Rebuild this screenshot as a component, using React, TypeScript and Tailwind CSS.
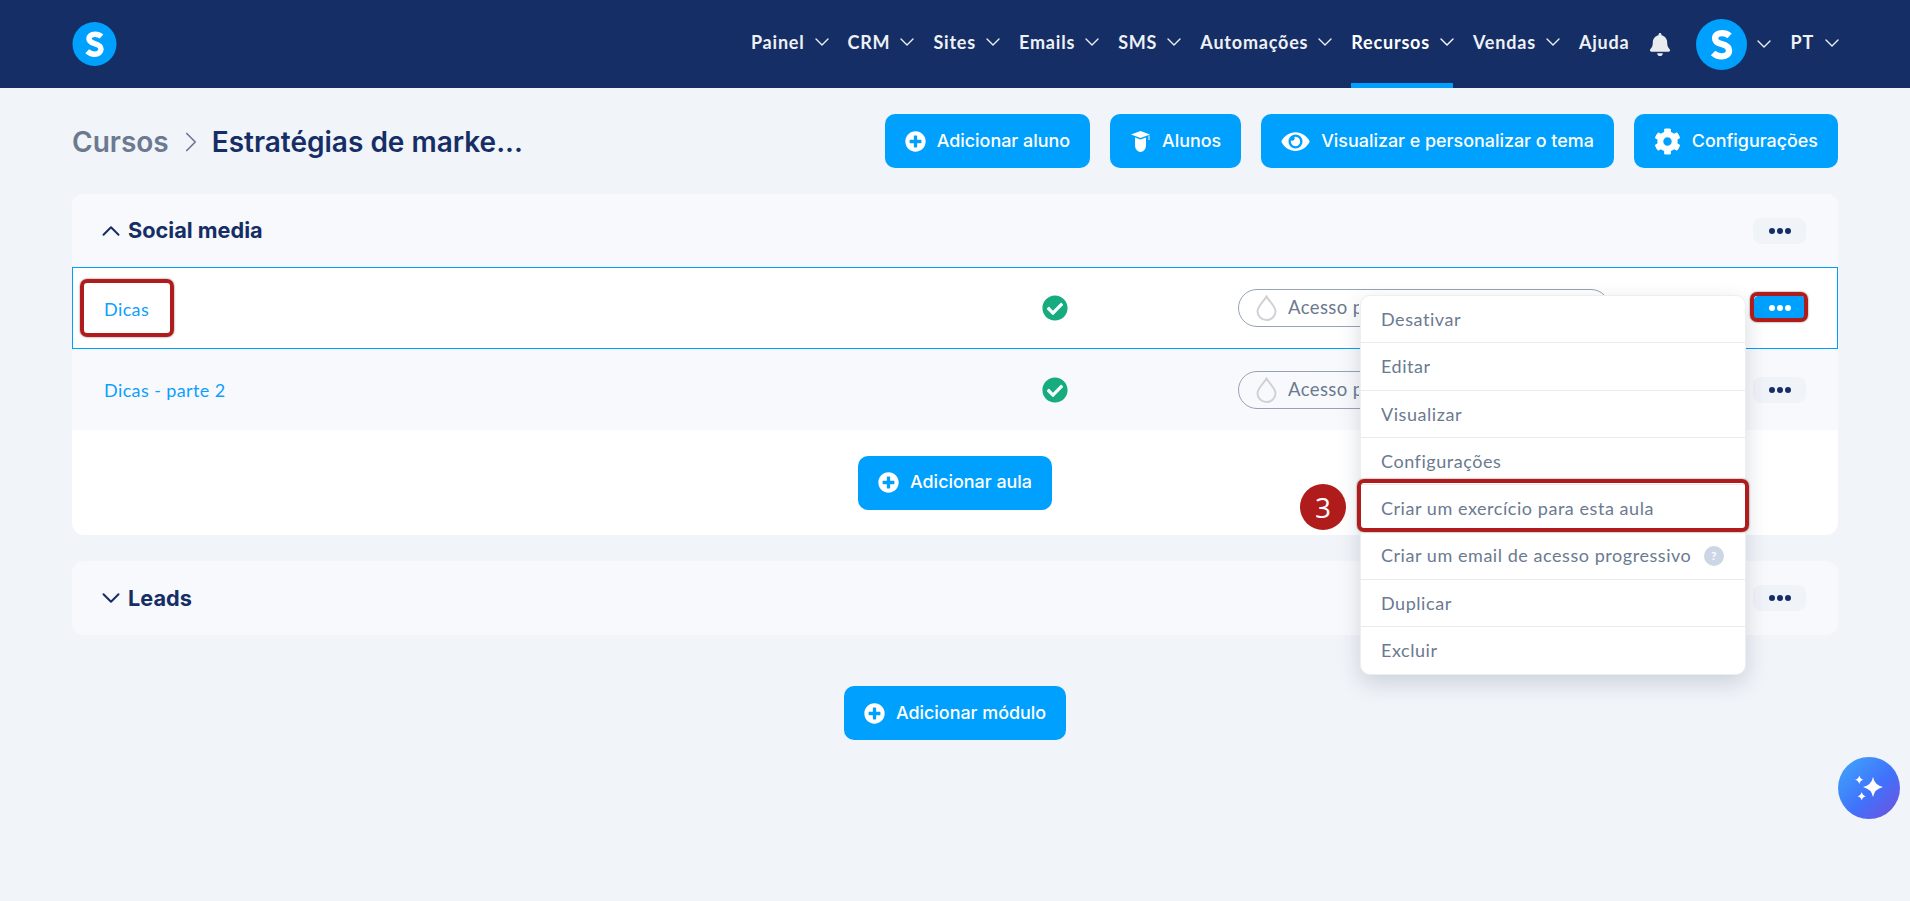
import { ChevronDown, ChevronRight, ChevronUp } from 'lucide-react';
import { FaBell, FaCheckCircle, FaCog, FaEye, FaPlusCircle } from 'react-icons/fa';
import type { ReactNode } from 'react';

const navItems = [
    { label: 'Painel', chevron: true },
    { label: 'CRM', chevron: true },
    { label: 'Sites', chevron: true },
    { label: 'Emails', chevron: true },
    { label: 'SMS', chevron: true },
    { label: 'Automações', chevron: true },
    { label: 'Recursos', chevron: true, active: true },
    { label: 'Vendas', chevron: true },
    { label: 'Ajuda', chevron: false },
];

const menuItems = [
    'Desativar',
    'Editar',
    'Visualizar',
    'Configurações',
    'Criar um exercício para esta aula',
    'Criar um email de acesso progressivo',
    'Duplicar',
    'Excluir',
];

function LogoS({ className }: { className: string }) {
    return (
        <svg viewBox="0 0 44 44" className={className}>
            <circle cx="22" cy="22" r="22" fill="#00a0ff" />
            <path
                d="M29 14.500c-1.800-1.600-4-2.300-6.600-2.300-3.400 0-5.900 1.700-5.900 4.600 0 2.600 2 3.800 5.600 4.800 4 1.100 6.400 2.400 6.400 5.500 0 3.200-2.700 5.100-6.400 5.100-3 0-5.400-1-7.400-2.900"
                fill="none"
                stroke="#fff"
                strokeWidth="5.5"
            />
        </svg>
    );
}

function NavChevron() {
    return <ChevronDown className="-mx-[6px] h-[24px] w-[24px]" strokeWidth={1.4} />;
}

function ActionButton({ icon, children }: { icon: ReactNode; children: ReactNode }) {
    return (
        <button className="flex h-[54px] items-center gap-[11px] rounded-[10px] bg-[#00a0ff] px-[20px] font-['Inter',sans-serif] text-[17.9px] font-medium text-white">
            {icon}
            {children}
        </button>
    );
}

function Dots({ active = false }: { active?: boolean }) {
    const dot = active ? 'bg-white' : 'bg-[#152e65]';
    return (
        <button
            className={`flex h-[26px] w-[53px] items-center justify-center gap-[2px] rounded-[8px] ${active ? 'bg-[#00a0ff]' : 'bg-[#f0f3f8]'}`}
        >
            <span className={`h-[6px] w-[6px] rounded-full ${dot}`}></span>
            <span className={`h-[6px] w-[6px] rounded-full ${dot}`}></span>
            <span className={`h-[6px] w-[6px] rounded-full ${dot}`}></span>
        </button>
    );
}

function LessonRow({ title, selected = false }: { title: string; selected?: boolean }) {
    return (
        <div
            className={`flex items-center pl-[32px] pr-[32px] ${selected ? 'h-[82px] bg-white ring-1 ring-inset ring-[#00a0ff]' : 'h-[81px]'}`}
        >
            <span className="w-[938px] pt-[2px] text-[18px] tracking-[0.4px] text-[#0d9fff]">{title}</span>
            <span className="w-[196px]">
                <FaCheckCircle className="h-[26px] w-[26px] text-[#16ac80]" />
            </span>
            <span className="flex h-[38px] w-[372px] items-center gap-[11px] rounded-full border border-[#97a3b4] pl-[17px] text-[18.5px] tracking-[0.4px] text-[#6b7a90]">
                <svg viewBox="0 0 21 26" className="h-[26px] w-[21px]" fill="none" stroke="#cfd1d6" strokeWidth="2">
                    <path d="M10.500 1.500C13 6.500 19.500 10.500 19.500 16.500a9 8.500 0 0 1-18 0C1.500 10.500 8 6.500 10.500 1.500Z" />
                </svg>
                {/* El resto del texto queda tapado por el menu */}
                <span className="w-[71px] overflow-hidden whitespace-nowrap">Acesso progressivo</span>
            </span>
            <span className="ml-auto">
                <Dots active={selected} />
            </span>
        </div>
    );
}

function StudentIcon() {
    return (
        <svg viewBox="0 0 19 21" className="mx-[1px] h-[21px] w-[19px]" fill="#fff">
            <path d="M9.500 0 19 3.500 9.500 7 0 3.500Z" />
            <path d="M4 6.500 9.500 8.500 15 6.500V14.500a5.500 6.500 0 0 1-11 0Z" />
            <path d="M17.500 4.500h1V9h-1Z" />
        </svg>
    );
}

export default function App() {
    return (
        <div className="relative min-h-[901px] overflow-hidden bg-[#f1f4f9] font-['Lato',sans-serif]">
            {/* Barra de navegacion */}
            <header className="flex h-[88px] items-center justify-between bg-[#152e65] px-[72px]">
                <LogoS className="h-[44px] w-[45px]" />
                <nav className="flex h-full items-center gap-[20px] text-[18px] font-bold tracking-[0.8px] text-[#eef1f5]">
                    {navItems.map((item) => (
                        <a
                            key={item.label}
                            className={`flex h-full items-center gap-[11px] border-b-[5px] pt-[1px] ${item.active ? 'border-[#00a0ff] text-white' : 'border-transparent'}`}
                        >
                            {item.label}
                            {item.chevron && <NavChevron />}
                        </a>
                    ))}
                    <FaBell className="h-[23px] w-[22px] text-[#e9ecef]" />
                    <span className="ml-[5px] flex items-center gap-[11px]">
                        <LogoS className="h-[51px] w-[51px]" />
                        <NavChevron />
                    </span>
                    <span className="flex items-center gap-[12px] pb-[3px]">
                        PT
                        <NavChevron />
                    </span>
                </nav>
            </header>

            <main className="px-[72px]">
                {/* Titulo y acciones */}
                <div className="flex h-[106px] items-center justify-between font-['Inter',sans-serif]">
                    <div className="flex items-center pt-[1px] text-[28px]">
                        <span className="font-semibold text-[#6b7a90]">Cursos</span>
                        <ChevronRight className="ml-[5px] mr-[4px] h-[34px] w-[34px] text-[#6b7a90]" strokeWidth={1.2} />
                        <span className="font-semibold text-[#152e65]">Estratégias de marke...</span>
                    </div>
                    <div className="flex gap-[20px]">
                        <ActionButton icon={<FaPlusCircle className="h-[21px] w-[21px]" />}>Adicionar aluno</ActionButton>
                        <ActionButton icon={<StudentIcon />}>Alunos</ActionButton>
                        <ActionButton icon={<FaEye className="h-[25px] w-[29px]" />}>Visualizar e personalizar o tema</ActionButton>
                        <ActionButton icon={<FaCog className="h-[27px] w-[27px]" />}>Configurações</ActionButton>
                    </div>
                </div>

                {/* Modulo abierto */}
                <section className="overflow-hidden rounded-[12px] bg-white">
                    <div className="bg-[#f8f9fc]">
                        <div className="flex h-[73px] items-center pl-[24px] pr-[32px]">
                            <ChevronUp className="mr-[2px] h-[30px] w-[30px] text-[#152e65]" strokeWidth={1.6} />
                            <h2 className="font-['Inter',sans-serif] text-[21.7px] font-bold text-[#152e65]">Social media</h2>
                            <span className="ml-auto">
                                <Dots />
                            </span>
                        </div>
                        <LessonRow title="Dicas" selected />
                        <LessonRow title="Dicas - parte 2" />
                    </div>
                    <div className="flex h-[105px] items-center justify-center">
                        <ActionButton icon={<FaPlusCircle className="h-[21px] w-[21px]" />}>Adicionar aula</ActionButton>
                    </div>
                </section>

                {/* Modulo cerrado */}
                <section className="mt-[26px] flex h-[74px] items-center rounded-[12px] bg-[#f8f9fc] pl-[24px] pr-[32px]">
                    <ChevronDown className="mr-[2px] h-[30px] w-[30px] text-[#152e65]" strokeWidth={1.6} />
                    <h2 className="font-['Inter',sans-serif] text-[21.7px] font-bold text-[#152e65]">Leads</h2>
                    <span className="ml-auto">
                        <Dots />
                    </span>
                </section>

                <div className="mt-[51px] flex justify-center">
                    <ActionButton icon={<FaPlusCircle className="h-[21px] w-[21px]" />}>Adicionar módulo</ActionButton>
                </div>
            </main>

            {/* Menu de la aula */}
            <div className="absolute left-[1360px] top-[295px] w-[386px] rounded-[10px] border border-[#eceef2] bg-white shadow-[0_8px_22px_rgba(40,55,80,0.18)]">
                {menuItems.map((item, i) => (
                    <div
                        key={item}
                        className={`flex h-[47.25px] items-center justify-between pl-[20px] pr-[21px] pt-[1px] text-[18px] tracking-[0.55px] text-[#6b7a90] ${i < menuItems.length - 1 ? 'border-b border-[#e9ebef]' : ''}`}
                    >
                        {item}
                        {i === 5 && (
                            <span className="flex h-[20px] w-[20px] items-center justify-center rounded-full bg-[#cdd6e4] text-[12px] font-bold text-white">
                                ?
                            </span>
                        )}
                    </div>
                ))}
            </div>

            {/* Marcas del tutorial */}
            <div className="absolute left-[80px] top-[279px] h-[58px] w-[94px] rounded-[7px] border-[4px] border-[#b01c1c] shadow-[0_0_2px_rgba(0,0,0,0.6)]"></div>
            <div className="absolute left-[1750px] top-[292px] h-[30px] w-[58px] rounded-[7px] border-[4px] border-[#b01c1c] shadow-[0_0_2px_rgba(0,0,0,0.6)]"></div>
            <div className="absolute left-[1357px] top-[479px] h-[53px] w-[392px] rounded-[7px] border-[4px] border-[#b01c1c] shadow-[0_0_2px_rgba(0,0,0,0.6)]"></div>
            <div className="absolute left-[1300px] top-[484px] flex h-[46px] w-[46px] items-center justify-center rounded-full bg-[#b01c1c] font-['Open_Sans',sans-serif] text-[28px] text-white">
                3
            </div>

            {/* Asistente */}
            <button className="absolute left-[1838px] top-[757px] h-[62px] w-[62px] rounded-full bg-[linear-gradient(135deg,#3fa9fb_0%,#4072fb_55%,#7250dd_100%)]">
                <svg viewBox="0 0 62 62" className="h-[62px] w-[62px]" fill="#fff">
                    <path d="M35 20Q36.500 28 45 30 36.500 32 35 40 33.500 32 25 30 33.500 28 35 20Z" />
                    <path d="M21.300 18.500Q22 22 25.500 22.700 22 23.400 21.300 27 20.600 23.400 17 22.700 20.600 22 21.300 18.500Z" />
                    <path d="M23.700 35Q24.400 38.600 28 39.300 24.400 40 23.700 43.600 23 40 19.400 39.300 23 38.600 23.700 35Z" />
                </svg>
            </button>
        </div>
    );
}
